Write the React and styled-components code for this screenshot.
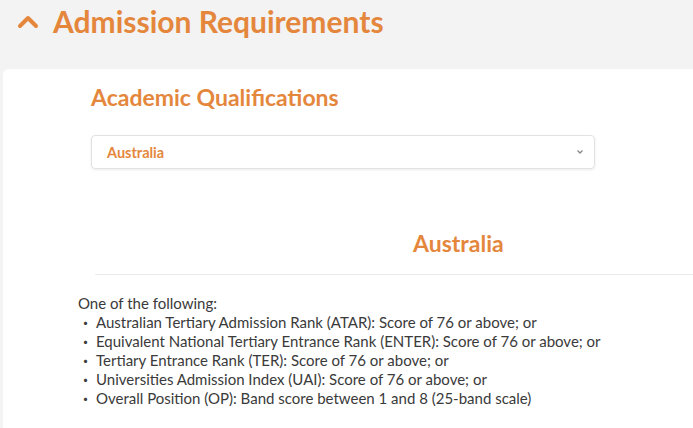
import React from 'react';
import styled, { createGlobalStyle } from 'styled-components';

const GlobalStyle = createGlobalStyle`
  body {
    margin: 0;
    background: #f3f3f3;
    font-family: Lato, "Liberation Sans", sans-serif;
  }
`;

const orange = '#e4873d';

const Page = styled.div`
  width: 693px;
  height: 428px;
  overflow: hidden;
  background: #f3f3f3;
`;

const Header = styled.div`
  display: flex;
  align-items: center;
  gap: 14px;
  height: 42px;
  padding: 0 0 0 17px;
`;

const Title = styled.h1`
  margin: 0;
  font-size: 30px;
  font-weight: 700;
  color: ${orange};
  letter-spacing: 0;
`;

const Panel = styled.div`
  margin: 27px 0 0 3px;
  background: #fff;
  border-top-left-radius: 6px;
  padding: 14px 0 0 0;
  height: 400px;
`;

const Section = styled.div`
  padding-left: 88px;
  width: 504px;
`;

const SubTitle = styled.h2`
  margin: 0;
  font-size: 23px;
  font-weight: 700;
  color: ${orange};
  line-height: 28px;
`;

const Select = styled.div`
  margin-top: 24px;
  height: 32px;
  border: 1px solid #e2e2e2;
  border-radius: 4px;
  box-shadow: 0 1px 3px rgba(0, 0, 0, 0.08);
  display: flex;
  align-items: center;
  justify-content: space-between;
  padding: 0 10px 0 15px;
  font-size: 14.5px;
  font-weight: 700;
  color: ${orange};
`;

const Country = styled.h3`
  margin: 60px 0 0 0;
  padding-left: 410px;
  width: 200px;
  font-size: 23px;
  font-weight: 700;
  color: ${orange};
  line-height: 28px;
`;

const Rule = styled.div`
  margin: 17px 0 0 92px;
  border-top: 1px solid #ececec;
`;

const Body = styled.div`
  padding: 19px 0 0 75px;
  font-size: 15px;
  color: #3a3a3a;
  line-height: 19px;
`;

const List = styled.ul`
  margin: 0;
  padding: 0;
  list-style: none;
`;

const Item = styled.li`
  display: flex;
  gap: 2px;
  &::before {
    content: '・';
    font-family: "Noto Sans CJK JP", sans-serif;
    width: 16px;
  }
`;

const items = [
  'Australian Tertiary Admission Rank (ATAR): Score of 76 or above; or',
  'Equivalent National Tertiary Entrance Rank (ENTER): Score of 76 or above; or',
  'Tertiary Entrance Rank (TER): Score of 76 or above; or',
  'Universities Admission Index (UAI): Score of 76 or above; or',
  'Overall Position (OP): Band score between 1 and 8 (25-band scale)',
];

export default function App() {
  return (
    <Page>
      <GlobalStyle />
      <Header>
        <svg width="22" height="16" viewBox="0 0 22 16">
          <path d="M3 13 L11 5 L19 13" fill="none" stroke={orange} strokeWidth="4" strokeLinecap="round" strokeLinejoin="round" />
        </svg>
        <Title>Admission Requirements</Title>
      </Header>
      <Panel>
        <Section>
          <SubTitle>Academic Qualifications</SubTitle>
          <Select>
            <span>Australia</span>
            <svg width="8" height="6" viewBox="0 0 8 6">
              <path d="M1.5 1.5 L4 4 L6.5 1.5" fill="none" stroke="#888" strokeWidth="1.3" />
            </svg>
          </Select>
        </Section>
        <Country>Australia</Country>
        <Rule />
        <Body>
          One of the following:
          <List>
            {items.map((t) => (
              <Item key={t}>{t}</Item>
            ))}
          </List>
        </Body>
      </Panel>
    </Page>
  );
}
